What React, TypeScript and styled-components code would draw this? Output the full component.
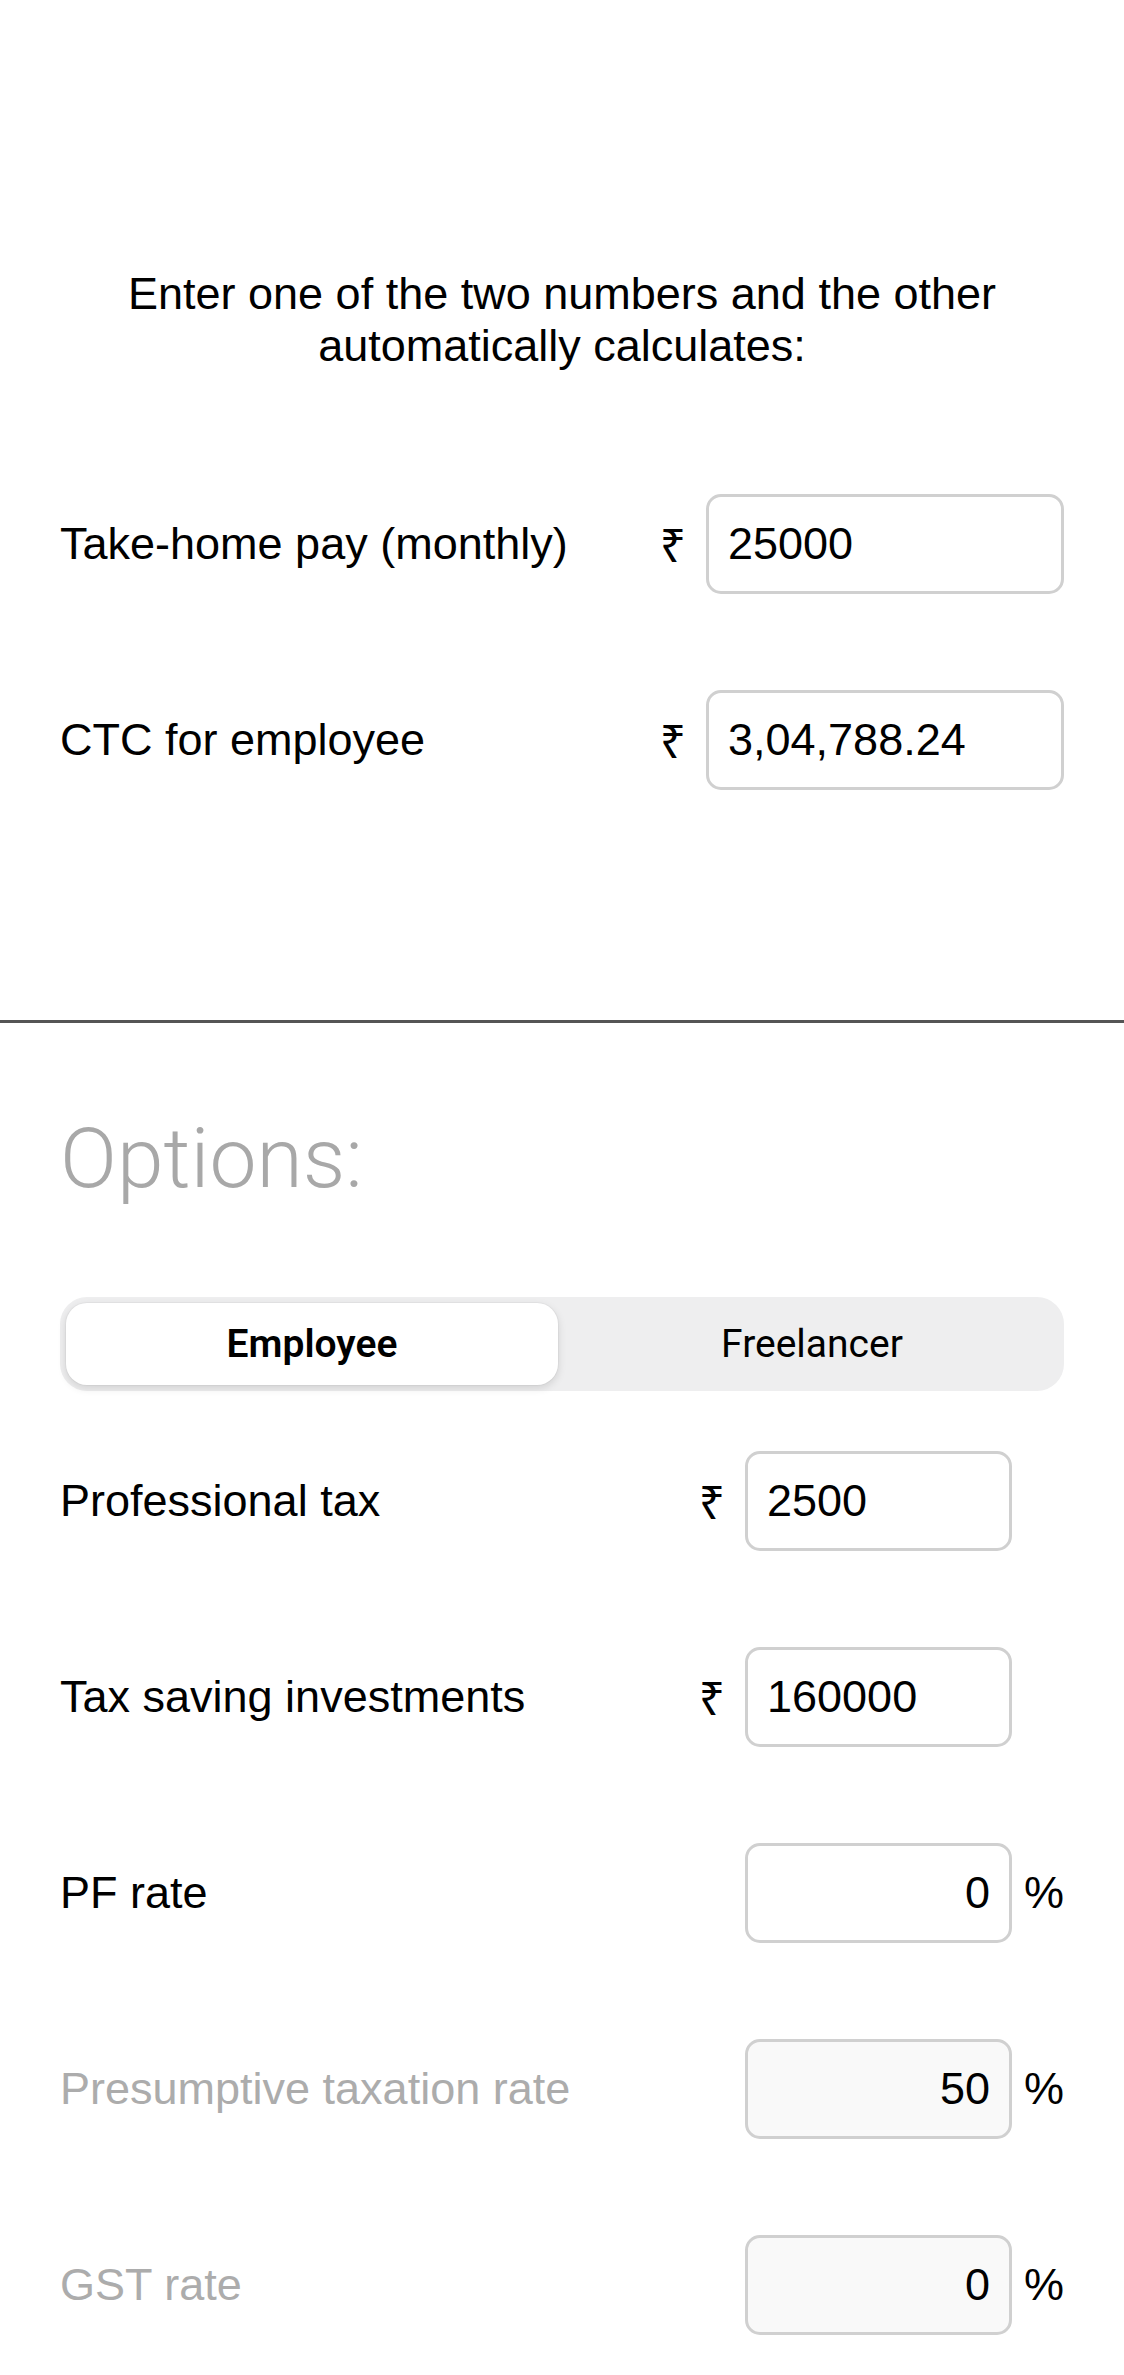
import React, { useState } from 'react';
import styled, { createGlobalStyle } from 'styled-components';

const GlobalStyle = createGlobalStyle`
    body {
        margin: 0;
        background: #fff;
        color: #000;
        font-family: "Liberation Sans", Arial, "Noto Sans", "DejaVu Sans", sans-serif;
        font-size: 45px;
    }

    * {
        box-sizing: border-box;
    }
`;

const Page = styled.main`
    width: 100%;
`;

const Intro = styled.section`
    padding: 268px 60px 182px;
`;

const Lead = styled.p`
    margin: 0 auto;
    text-align: center;
    font-size: 45px;
    line-height: 52px;
`;

const Rows = styled.div`
    display: flex;
    flex-direction: column;
    margin-top: ${(p: { $gap: number }) => p.$gap}px;
`;

const Divider = styled.hr`
    margin: 0;
    border: 0;
    height: 3px;
    background: #555;
`;

const Options = styled.section`
    padding: 86px 60px 0;
`;

const OptionsTitle = styled.h2`
    margin: 0;
    font-family: Roboto, "Liberation Sans", sans-serif;
    font-weight: 300;
    font-size: 84px;
    line-height: 100px;
    color: #a8a8a8;
`;

const Segmented = styled.div`
    display: grid;
    grid-template-columns: 1fr 1fr;
    column-gap: 8px;
    height: 94px;
    margin-top: 88px;
    padding: 6px;
    border-radius: 27px;
    background: #eeeeef;
`;

const Segment = styled.button<{ $active?: boolean }>`
    border: 0;
    border-radius: 21px;
    background: ${(p) => (p.$active ? '#fff' : 'transparent')};
    box-shadow: ${(p) => (p.$active ? '0 3px 9px rgba(0, 0, 0, 0.13), 0 0 0 1px rgba(0, 0, 0, 0.03)' : 'none')};
    font-family: Roboto, "Liberation Sans", sans-serif;
    font-size: 39px;
    font-weight: ${(p) => (p.$active ? 600 : 400)};
    color: #000;
    cursor: pointer;
`;

const Row = styled.div`
    display: flex;
    align-items: center;
    height: 196px;
`;

const Label = styled.label<{ $muted?: boolean }>`
    flex: 1;
    color: ${(p) => (p.$muted ? '#acacac' : '#000')};
    line-height: 52px;
`;

const Prefix = styled.span`
    margin-right: 20px;
    font-family: "Noto Sans", "DejaVu Sans", sans-serif;
    font-size: 46px;
`;

const Input = styled.input<{ $wide?: boolean; $right?: boolean }>`
    width: ${(p) => (p.$wide ? 358 : 267)}px;
    height: 100px;
    padding: 0 19px;
    border: 3px solid #d0d0d0;
    border-radius: 15px;
    background: #fff;
    font-family: "Liberation Sans", Arial, sans-serif;
    font-size: 45px;
    color: #000;
    text-align: ${(p) => (p.$right ? 'right' : 'left')};
    outline: none;

    &:disabled {
        background: #f9f9f9;
        color: #000;
        -webkit-text-fill-color: #000;
        opacity: 1;
    }
`;

const Unit = styled.span`
    width: 52px;
    text-align: right;
`;

type FieldProps = {
    label: string;
    value: string;
    prefix?: string;
    unit?: string;
    wide?: boolean;
    muted?: boolean;
    withUnitSlot?: boolean;
};

function Field({ label, value, prefix, unit, wide, muted, withUnitSlot }: FieldProps) {
    return (
        <Row>
            <Label $muted={muted}>{label}</Label>
            {prefix && <Prefix>{prefix}</Prefix>}
            <Input defaultValue={value} $wide={wide} $right={!!unit} disabled={muted} />
            {withUnitSlot && <Unit>{unit}</Unit>}
        </Row>
    );
}

export default function App() {
    const [mode, setMode] = useState<'employee' | 'freelancer'>('employee');

    return (
        <Page>
            <GlobalStyle />
            <Intro>
                <Lead>Enter one of the two numbers and the other automatically calculates:</Lead>
                <Rows $gap={74}>
                    <Field label="Take-home pay (monthly)" prefix="₹" value="25000" wide />
                    <Field label="CTC for employee" prefix="₹" value="3,04,788.24" wide />
                </Rows>
            </Intro>
            <Divider />
            <Options>
                <OptionsTitle>Options:</OptionsTitle>
                <Segmented>
                    <Segment $active={mode === 'employee'} onClick={() => setMode('employee')}>Employee</Segment>
                    <Segment $active={mode === 'freelancer'} onClick={() => setMode('freelancer')}>Freelancer</Segment>
                </Segmented>
                <Rows $gap={12}>
                    <Field label="Professional tax" prefix="₹" value="2500" withUnitSlot />
                    <Field label="Tax saving investments" prefix="₹" value="160000" withUnitSlot />
                    <Field label="PF rate" value="0" unit="%" withUnitSlot />
                    <Field label="Presumptive taxation rate" value="50" unit="%" withUnitSlot muted />
                    <Field label="GST rate" value="0" unit="%" withUnitSlot muted />
                </Rows>
            </Options>
        </Page>
    );
}
